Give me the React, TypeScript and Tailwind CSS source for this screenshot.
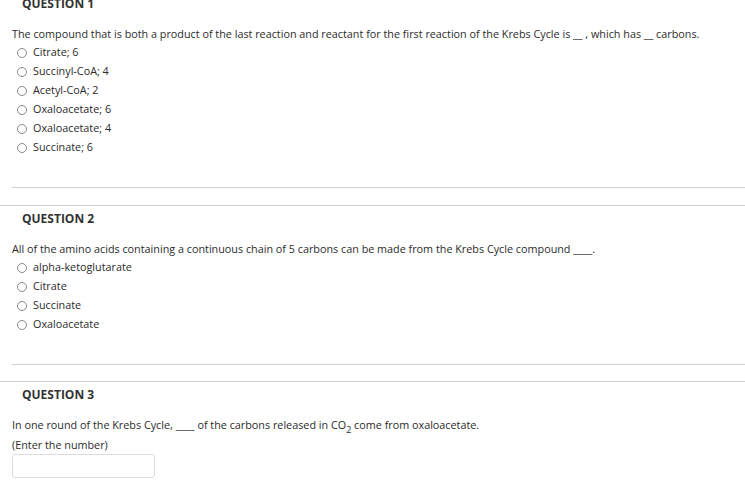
import React from 'react';

type Question = {
  id: number;
  prompt: React.ReactNode;
  options?: string[];
  note?: string;
};

const questions: Question[] = [
  {
    id: 1,
    prompt: (
      <>
        The compound that is both a product of the last reaction and reactant for the first reaction of the Krebs Cycle is __ , which has __ carbons.
      </>
    ),
    options: ['Citrate; 6', 'Succinyl-CoA; 4', 'Acetyl-CoA; 2', 'Oxaloacetate; 6', 'Oxaloacetate; 4', 'Succinate; 6'],
  },
  {
    id: 2,
    prompt: <>All of the amino acids containing a continuous chain of 5 carbons can be made from the Krebs Cycle compound ____.</>,
    options: ['alpha-ketoglutarate', 'Citrate', 'Succinate', 'Oxaloacetate'],
  },
  {
    id: 3,
    prompt: (
      <>
        In one round of the Krebs Cycle, ____ of the carbons released in CO
        <sub className="text-[9px] leading-none align-[-2px]">2</sub> come from oxaloacetate.
      </>
    ),
    note: '(Enter the number)',
  },
];

function Radio() {
  return (
    <span className="inline-block w-[10px] h-[10px] rounded-full border border-[#8a8a8a] bg-white shrink-0" />
  );
}

function QuestionBlock({ q, index, last }: { q: Question; index: number; last: boolean }) {
  return (
    <div className={index === 0 ? '-mt-[4px]' : 'border-t border-[#d0d0d0] pt-[5px]'}>
      <h3 className="pl-[22px] text-[12px] leading-[16px] font-bold text-[#333]">QUESTION {q.id}</h3>
      <div className="pl-[12px] mt-[13px]">
        <p className="text-[10.8px] leading-[18px] text-[#2b2b2b]">{q.prompt}</p>
        {q.options && (
          <ul>
            {q.options.map((opt) => (
              <li key={opt} className="flex items-center h-[19px] pl-[5px] gap-[6px] text-[10.8px] text-[#2b2b2b]">
                <Radio />
                <span>{opt}</span>
              </li>
            ))}
          </ul>
        )}
        {q.note && (
          <>
            <p className="text-[10.8px] leading-[19px] mt-[1px] text-[#2b2b2b]">{q.note}</p>
            <input
              type="text"
              className="block w-[143px] h-[24px] rounded-[3px] border border-[#dcdcdc] bg-white outline-none"
            />
          </>
        )}
      </div>
      {!last && (
        <div
          className={
            index === 0
              ? 'ml-[12px] mt-[30px] mb-[17px] border-t border-[#d0d0d0]'
              : 'ml-[12px] mt-[30px] mb-[16px] border-t border-[#d0d0d0]'
          }
        />
      )}
    </div>
  );
}

export default function App() {
  return (
    <div className="w-[745px] h-[491px] overflow-hidden bg-white" style={{ fontFamily: '"Open Sans", "Liberation Sans", sans-serif' }}>
      {questions.map((q, i) => (
        <QuestionBlock key={q.id} q={q} index={i} last={i === questions.length - 1} />
      ))}
    </div>
  );
}
